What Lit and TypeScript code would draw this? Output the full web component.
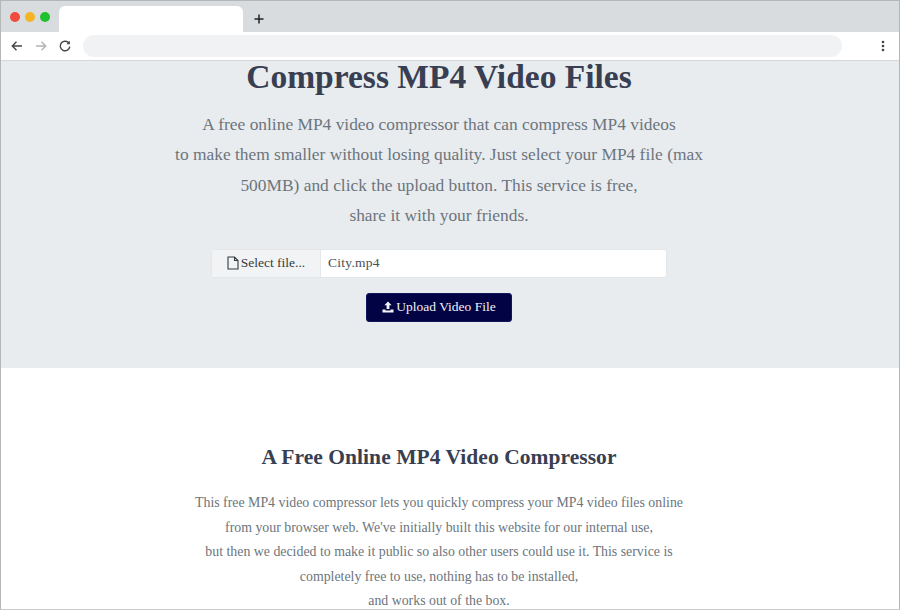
import { LitElement, html, css } from "lit";
import { customElement } from "lit/decorators.js";

@customElement("app-root")
export class AppRoot extends LitElement {
  static styles = css`
    :host { display: block; width: 900px; height: 610px; overflow: hidden; box-sizing: border-box; border: 1px solid #b4b7ba; border-bottom-color:#c9cbcd; background: #fff; font-family: "Liberation Serif", serif; }
    .tabbar { height: 31px; background: #d8dcdf; display: flex; align-items: flex-end; box-sizing: border-box; padding-left: 9px; }
    .dots { display: flex; gap: 5px; align-self: center; margin-right: 8.5px; margin-top:1px; }
    .dot { width: 10px; height: 10px; border-radius: 50%; }
    .tab { width: 184px; height: 26px; background: #fff; border-radius: 6px 6px 0 0; }
    .plus { margin-left: 11px; align-self: center; margin-top: 5px; display: flex; }
    .toolbar { height: 29px; background: #fff; display: flex; align-items: center; box-sizing: border-box; border-bottom: 1px solid #d5d7d9; padding-left: 9px; }
    .nav { display: flex; gap: 10px; margin-right: 11px; }
    .url { width: 759px; height: 22px; border-radius: 11px; background: #f0f2f3; }
    .kebab { margin-left: 39px; display: flex; }
    .hero { height: 307px; background: #e9ecef; box-sizing: border-box; display: flex; flex-direction: column; align-items: center; padding-right: 22px; }
    h1 { margin: 0; font-size: 33.5px; line-height: 32px; font-weight: 700; color: #383f52; }
    .lead { margin-top: 16px; font-size: 17.4px; line-height: 30.4px; color: #6c757d; text-align: center; }
    .file { margin-top: 18px; width: 456px; height: 29px; display: flex; background: #fff; border: 1px solid #e4e7ea; border-radius: 3px; box-sizing: border-box; font-size: 13.5px; align-items: stretch; }
    .sel { width: 108px; background: #f1f3f5; border-right: 1px solid #e4e7ea; display: flex; align-items: center; justify-content: center; gap: 2px; color: #343a40; }
    .name { padding-left: 7px; display: flex; align-items: center; color: #495057; letter-spacing: .25px; }
    .btn { margin-top: 15px; width: 146px; height: 29px; background: #020344; border-radius: 3px; border: 1px solid #14165a; box-sizing: border-box; color: #f2f2f6; font-size: 13.5px; display: flex; align-items: center; justify-content: center; gap: 2px; }
    .body { display: flex; flex-direction: column; align-items: center; padding-right: 22px; }
    h2 { margin: 76px 0 0; font-size: 21.5px; line-height: 26px; font-weight: 700; color: #383f52; letter-spacing: .05px; }
    .text { margin-top: 21px; font-size: 13.85px; line-height: 24.5px; color: #6c757d; text-align: center; }
  `;
  render() {
    return html`
      <div class="tabbar">
        <div class="dots">
          <span class="dot" style="background:#f04b3e"></span>
          <span class="dot" style="background:#f5b424"></span>
          <span class="dot" style="background:#1fc12f"></span>
        </div>
        <div class="tab"></div>
        <div class="plus">
          <svg width="10" height="10" viewBox="0 0 10 10"><path d="M5 0.5v9M0.5 5h9" stroke="#222" stroke-width="1.5" fill="none"/></svg>
        </div>
      </div>
      <div class="toolbar">
        <div class="nav">
          <svg width="14" height="14" viewBox="0 0 14 14" fill="none" stroke="#444" stroke-width="1.4"><path d="M12 7H2.5M6.5 2.8 2.3 7l4.2 4.2"/></svg>
          <svg width="14" height="14" viewBox="0 0 14 14" fill="none" stroke="#b0b2b4" stroke-width="1.4"><path d="M2 7h9.5M7.5 2.8 11.7 7l-4.2 4.2"/></svg>
          <svg width="14" height="14" viewBox="0 0 14 14" fill="none" stroke="#444" stroke-width="1.4"><path d="M11.2 4.6A4.8 4.8 0 1 0 11.8 7.6"/><path d="M11.8 1.8v3.4H8.4" fill="#444" stroke="none"/></svg>
        </div>
        <div class="url"></div>
        <div class="kebab">
          <svg width="4" height="12" viewBox="0 0 4 12" fill="#444"><circle cx="2" cy="2" r="1.3"/><circle cx="2" cy="6" r="1.3"/><circle cx="2" cy="10" r="1.3"/></svg>
        </div>
      </div>
      <div class="hero">
        <h1>Compress MP4 Video Files</h1>
        <div class="lead">
          <div>A free online MP4 video compressor that can compress MP4 videos</div>
          <div>to make them smaller without losing quality. Just select your MP4 file (max</div>
          <div>500MB) and click the upload button. This service is free,</div>
          <div>share it with your friends.</div>
        </div>
        <div class="file">
          <div class="sel">
            <svg width="12" height="14" viewBox="0 0 12 14" fill="none" stroke="#343a40" stroke-width="1.1"><path d="M1 1h6.5L11 4.5V13H1zM7.5 1v3.5H11"/></svg>
            <span>Select file...</span>
          </div>
          <div class="name">City.mp4</div>
        </div>
        <div class="btn">
          <svg width="12" height="12" viewBox="0 0 12 12" fill="#f2f2f6"><path d="M6 .5 9.6 4.3H7.4V8H4.6V4.3H2.4zM.5 8.6h3v.8h5v-.8h3v2.9H.5z"/></svg>
          <span>Upload Video File</span>
        </div>
      </div>
      <div class="body">
        <h2>A Free Online MP4 Video Compressor</h2>
        <div class="text">
          <div>This free MP4 video compressor lets you quickly compress your MP4 video files online</div>
          <div>from your browser web. We've initially built this website for our internal use,</div>
          <div>but then we decided to make it public so also other users could use it. This service is</div>
          <div>completely free to use, nothing has to be installed,</div>
          <div>and works out of the box.</div>
        </div>
      </div>
    `;
  }
}
